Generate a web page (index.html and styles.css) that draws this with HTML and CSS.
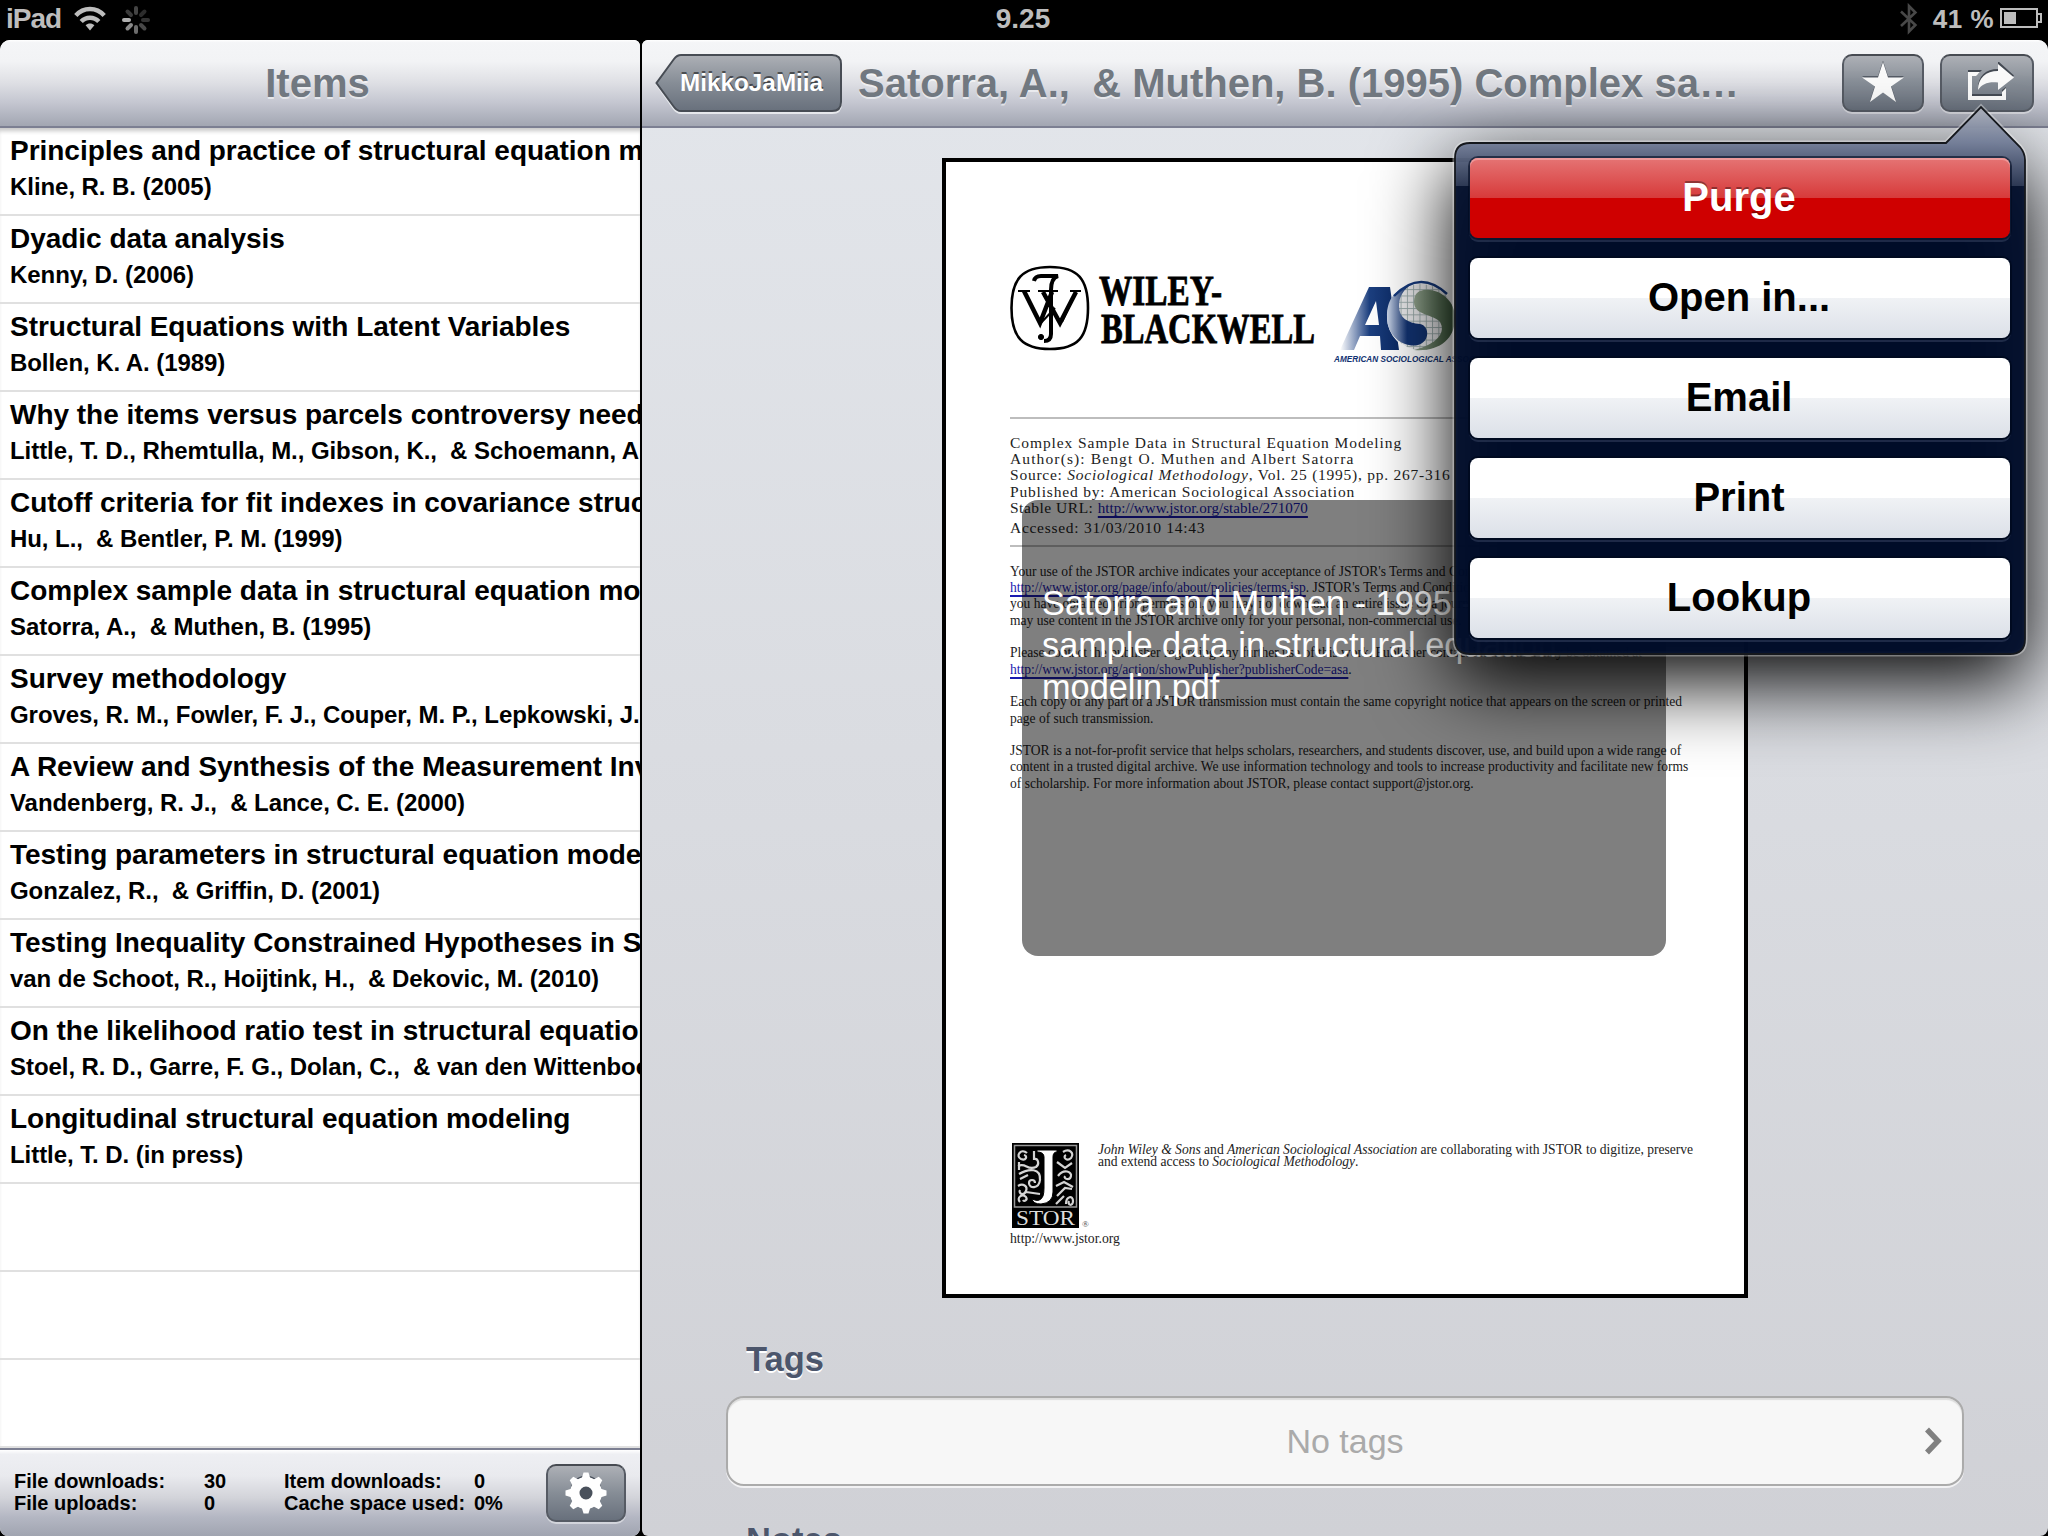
FILE: index.html
```html
<!DOCTYPE html>
<html lang="en">
<head>
<meta charset="utf-8">
<title>Items</title>
<link rel="stylesheet" href="styles.css">
</head>
<body>
<header class="status">
  <div class="status-side">
    <span class="device">iPad</span>
    <svg class="wifi" width="32" height="26" viewBox="0 0 32 26" fill="none" stroke="#bdbdbd" stroke-width="4.4">
      <path d="M1.8 9.5C9.5 .8 22.5 .8 30.2 9.5"/><path d="M7.2 15.6C12 10.4 20 10.4 24.8 15.6"/><path d="M16 24.6l-4.4-5.4c2.6-2.2 6.2-2.2 8.800 0z" fill="#bdbdbd" stroke="none"/>
    </svg>
    <svg class="spinner" width="30" height="30" viewBox="-15 -15 30 30" stroke-width="4" stroke-linecap="round">
      <path d="M0-7v-5" stroke="#444"/><path d="M5-5l3.500-3.500" stroke="#2c2c2c"/><path d="M7 0h5" stroke="#333"/><path d="M5 5l3.500 3.500" stroke="#484848"/><path d="M0 7v5" stroke="#6c6c6c"/><path d="M-5 5l-3.500 3.500" stroke="#8a8a8a"/><path d="M-7 0h-5" stroke="#b0b0b0"/><path d="M-5-5l-3.500-3.500" stroke="#3a3a3a"/>
    </svg>
  </div>
  <div class="clock">9.25</div>
  <div class="status-side status-right">
    <svg class="bluetooth" width="18" height="32" viewBox="0 0 18 32" fill="none" stroke="#484848" stroke-width="2.600"><path d="M1 8.500L15.400 22 9 28.500V3L15.400 9.500 1 23"/></svg>
    <span class="percent">41 %</span>
    <svg width="42" height="22" viewBox="0 0 42 22"><path d="M1 1h36v18H1z" fill="none" stroke="#bdbdbd" stroke-width="2"/><path d="M4 4h12v12H4z" fill="#bdbdbd"/><path d="M38 6h3v8h-3" fill="none" stroke="#bdbdbd" stroke-width="2"/></svg>
  </div>
</header>

<main class="split">
  <section class="pane master">
    <div class="navbar"><h1 class="nav-title items-title">Items</h1></div>
    <ul class="items">
      <li class="item"><b>Principles and practice of structural equation modeling</b><span>Kline, R. B. (2005)</span></li>
      <li class="item"><b>Dyadic data analysis</b><span>Kenny, D. (2006)</span></li>
      <li class="item"><b>Structural Equations with Latent Variables</b><span>Bollen, K. A. (1989)</span></li>
      <li class="item"><b>Why the items versus parcels controversy needn't be one</b><span>Little, T. D., Rhemtulla, M., Gibson, K.,  &amp; Schoemann, A. M.</span></li>
      <li class="item"><b>Cutoff criteria for fit indexes in covariance structure analysis</b><span>Hu, L.,  &amp; Bentler, P. M. (1999)</span></li>
      <li class="item"><b>Complex sample data in structural equation modeling</b><span>Satorra, A.,  &amp; Muthen, B. (1995)</span></li>
      <li class="item"><b>Survey methodology</b><span>Groves, R. M., Fowler, F. J., Couper, M. P., Lepkowski, J. M.</span></li>
      <li class="item"><b>A Review and Synthesis of the Measurement Invariance</b><span>Vandenberg, R. J.,  &amp; Lance, C. E. (2000)</span></li>
      <li class="item"><b>Testing parameters in structural equation modeling</b><span>Gonzalez, R.,  &amp; Griffin, D. (2001)</span></li>
      <li class="item"><b>Testing Inequality Constrained Hypotheses in SEM</b><span>van de Schoot, R., Hoijtink, H.,  &amp; Dekovic, M. (2010)</span></li>
      <li class="item"><b>On the likelihood ratio test in structural equation modeling</b><span>Stoel, R. D., Garre, F. G., Dolan, C.,  &amp; van den Wittenboer, G.</span></li>
      <li class="item"><b>Longitudinal structural equation modeling</b><span>Little, T. D. (in press)</span></li>
      <li class="item"></li><li class="item"></li><li class="item"></li>
    </ul>
    <footer class="toolbar">
      <dl class="stats">
        <dt>File downloads:</dt><dd>30</dd><dt>Item downloads:</dt><dd>0</dd>
        <dt>File uploads:</dt><dd>0</dd><dt>Cache space used:</dt><dd>0%</dd>
      </dl>
      <button class="btn btn-gear" aria-label="Settings">
        <svg width="44" height="46" viewBox="-22 -23 44 46">
          <circle r="15.500" cy="-2" fill="#4a515c"/>
          <g fill="#fff"><path fill-rule="evenodd" d="M0-16A16 16 0 1 1 0 16 16 16 0 0 1 0-16zM0-6.500A6.500 6.500 0 1 0 0 6.500 6.500 6.500 0 0 0 0-6.500z"/>
          <path id="tooth" d="M-4.500-14L-2.500-20.500h5L4.500-14z"/><use href="#tooth" transform="rotate(45)"/><use href="#tooth" transform="rotate(90)"/><use href="#tooth" transform="rotate(135)"/><use href="#tooth" transform="rotate(180)"/><use href="#tooth" transform="rotate(225)"/><use href="#tooth" transform="rotate(270)"/><use href="#tooth" transform="rotate(315)"/></g>
        </svg>
      </button>
    </footer>
  </section>

  <section class="pane detail">
    <div class="navbar detail-bar">
      <button class="back">
        <svg class="back-shape" width="188" height="62" viewBox="0 0 188 62">
          <defs><linearGradient id="steel" x1="0" y1="0" x2="0" y2="1"><stop offset="0" stop-color="#adb0b6"/><stop offset=".5" stop-color="#868d96"/><stop offset="1" stop-color="#68707c"/></linearGradient></defs>
          <path d="M26 4H177Q186 4 186 13V51Q186 60 177 60H26Q22 60 19 56L2 32 19 9Q22 4 26 4Z" fill="none" stroke="#e6e8ec" stroke-width="2"/>
          <path d="M26 2H177Q186 2 186 11V49Q186 58 177 58H26Q22 58 19 54L1.500 30 19 6Q22 2 26 2Z" fill="url(#steel)" stroke="#474c54" stroke-width="2"/>
        </svg>
        <span class="back-label">MikkoJaMiia</span>
      </button>
      <h2 class="nav-title detail-title">Satorra, A.,  &amp; Muthen, B. (1995) Complex sa…</h2>
      <button class="btn btn-star" aria-label="Favourite">
        <svg width="44" height="44" viewBox="0 0 44 44"><path d="M22 1l5 15.500h16L30 25.500 35 41 22 31.500 9 41l5-15.500L1 16.500h16z" fill="#555b65" transform="translate(0 -1.500)"/><path d="M22 1l5 15.500h16L30 25.500 35 41 22 31.500 9 41l5-15.500L1 16.500h16z" fill="#fafafa"/></svg>
      </button>
      <button class="btn btn-share" aria-label="Share">
        <svg width="50" height="40" viewBox="0 0 50 40">
          <g fill="#444a53" transform="translate(0 -2)"><path d="M2 10H16L12 14H6V34H36V30L40 27V38H2Z"/><path d="M32 1L48 15.500 32 29V21C22 20 16 22 12 28 12 16 20 9 32 9Z"/></g>
          <g fill="#fafafa"><path d="M2 10H14L10 14H6V34H36V30L40 26V38H2Z"/><path d="M32 2L48 15.500 32 28V20.500C22 19.500 16 22 12 28 12 16 20 9 32 9Z"/></g>
        </svg>
      </button>
    </div>

    <div class="content">
      <article class="page">
        <svg class="logos" width="690" height="112" viewBox="0 0 690 112">
          <g fill="none" stroke="#000" transform="translate(0 -2)">
            <path d="M40 3C68 3 78 15 78 44S68 85 40 85 1.500 73 1.500 44 12 3 40 3Z" stroke-width="2.600"/>
            <path d="M24 17q1-5 7-5H48Q41 14 41 26V70Q41 77 34 77" stroke-width="4"/>
            <path d="M14 27L30 59 42 28M33 28L50 59 66 28" stroke-width="4.500"/>
            <path d="M8 27H20M28 27H48M60 27H71M45 44L30 60M66 28L52 58" stroke-width="2"/>
            <circle cx="31" cy="73" r="2.600" fill="#000"/>
          </g>
          <g class="wiley"><text x="89" y="38.500" textLength="123" lengthAdjust="spacingAndGlyphs">WILEY-</text><text x="91" y="76.500" textLength="214" lengthAdjust="spacingAndGlyphs">BLACKWELL</text></g>
          <defs>
            <linearGradient id="aFill"><stop offset="0" stop-color="#fff"/><stop offset=".5" stop-color="#1c3f80"/><stop offset="1" stop-color="#0b2b66"/></linearGradient>
            <linearGradient id="sFill"><stop offset="0" stop-color="#cfd9ea"/><stop offset=".5" stop-color="#123372"/><stop offset="1" stop-color="#123372"/></linearGradient>
            <linearGradient id="gFill"><stop offset="0" stop-color="#93a48f"/><stop offset="1" stop-color="#3c5a3b"/></linearGradient>
            <pattern id="grid" width="6.300" height="6.300" patternUnits="userSpaceOnUse"><path d="M0 .5H6.300M.5 0V6.300" stroke="#9aa" stroke-width=".9"/></pattern>
          </defs>
          <g transform="translate(0 -2)">
          <path fill="url(#aFill)" fill-rule="evenodd" d="M330 86L359 23H380L389 86H371L370 72H350L344 86ZM355 61H369L366 37Z"/>
          <circle cx="411" cy="53" r="34" fill="#fff"/><circle cx="411" cy="53" r="33" fill="#ececee"/><circle cx="411" cy="53" r="33" fill="url(#grid)"/>
          <path d="M402 20C383 27 377 36 377 53 377 74 396 84 408 81 420 78 420 62 410 60 398 59 389 54 389 42 389 32 394 25 402 20Z" fill="url(#sFill)"/>
          <path d="M410 27C425 22 445 34 445 54 445 76 428 88 404 86 428 80 436 68 430 58 424 50 404 52 404 38 404 32 406 29 410 27Z" fill="url(#gFill)"/>
          <path d="M384 32Q410 5 437 30" fill="none" stroke="#163a7d" stroke-width="2.500"/>
          <text class="asa" x="324" y="98" textLength="168" lengthAdjust="spacingAndGlyphs">AMERICAN SOCIOLOGICAL ASSOCIATION</text>
          </g>
        </svg>
        <hr>
        <div class="meta">
          <p class="m1">Complex Sample Data in Structural Equation Modeling</p>
          <p class="m2">Author(s): Bengt O. Muthen and Albert Satorra</p>
          <p class="m3">Source: <i>Sociological Methodology</i>, Vol. 25 (1995), pp. 267-316</p>
          <p class="m4">Published by: American Sociological Association</p>
          <p class="m5">Stable URL: <a>http://www.jstor.org/stable/271070</a></p>
          <p class="m6">Accessed: 31/03/2010 14:43</p>
        </div>
        <hr>
        <div class="terms">
          <p>Your use of the JSTOR archive indicates your acceptance of JSTOR's Terms and Conditions of Use, available at<br><a>http://www.jstor.org/page/info/about/policies/terms.jsp</a>. JSTOR's Terms and Conditions of Use provides, in part, that unless<br>you have obtained prior permission, you may not download an entire issue of a journal or multiple copies of articles, and you<br>may use content in the JSTOR archive only for your personal, non-commercial use.</p>
          <p>Please contact the publisher regarding any further use of this work. Publisher contact information may be obtained at<br><a>http://www.jstor.org/action/showPublisher?publisherCode=asa</a>.</p>
          <p>Each copy of any part of a JSTOR transmission must contain the same copyright notice that appears on the screen or printed<br>page of such transmission.</p>
          <p>JSTOR is a not-for-profit service that helps scholars, researchers, and students discover, use, and build upon a wide range of<br>content in a trusted digital archive. We use information technology and tools to increase productivity and facilitate new forms<br>of scholarship. For more information about JSTOR, please contact support@jstor.org.</p>
        </div>
        <div class="imprint">
          <svg width="80" height="88" viewBox="0 0 80 88">
            <path d="M2 1H69V86H2Z" fill="#000"/><path d="M4.500 3.500H66.500V65H4.500Z" fill="none" stroke="#999" stroke-width="1.500"/>
            <g fill="none" stroke="#d4d4d4" stroke-width="2.200"><path d="M17 11c-6-5-12 3-6 6 5 2 7-3 3-4M8 24c8-4 9 5 18 1 4-3 2-9-2-8M9 32c10-6 22-6 21 6-1 9-11 9-11 3 0-4 6-4 6 0M8 44c5-3 10 0 8 5s-8 3-6-1M10 60c-4-4 2-9 6-5 2 3-2 5-3 3M16 50l14 2M53 10c6-4 12 1 8 6-4 4-9-1-5-3M47 20l8 6 7-5M48 34c6-8 14-4 13 0-1 5-8 3-6 0M46 44l8-4 9 5M47 54l8-8 7 1M46 62l8-8M56 62c0-8 7-9 7-3s-6 4-4 0M10 37l8-4M24 9v9M9 28v-8"/></g>
            <path d="M27 8H47V10Q43 10 43 15V50Q43 61 31 62 23 62 22 57 30 61 33 54 34 51 34 46V15Q34 10 27 10Z" fill="#fff" stroke="#000"/>
            <text class="stor" x="6" y="83" textLength="59" lengthAdjust="spacingAndGlyphs">STOR</text><text class="reg" x="72" y="85">®</text>
          </svg>
          <p class="collab"><i>John Wiley &amp; Sons</i> and <i>American Sociological Association</i> are collaborating with JSTOR to digitize, preserve<br>and extend access to <i>Sociological Methodology</i>.</p>
        </div>
        <p class="site">http://www.jstor.org</p>
        <div class="file-overlay">Satorra and Muthen - 1995 - Complex<br>sample data in structural equation<br>modelin.pdf</div>
      </article>

      <h3 class="group-title">Tags</h3>
      <div class="tag-row"><span>No tags</span><svg width="20" height="28" viewBox="0 0 20 28" fill="none" stroke="#808080" stroke-width="5.500"><path d="M3 2.500L14 14 3 25.500"/></svg></div>
      <h3 class="group-title notes">Notes</h3>
    </div>
  </section>
</main>

<div class="popover-shadow"></div>
<div class="popover">
  <svg class="popover-shape" width="580" height="560" viewBox="0 0 580 560">
    <defs>
      <clipPath id="shape"><path id="outline" d="M20 43H496L531 7 570 47Q575 53 575 60V539Q575 554 560 554H20Q5 554 5 539V58Q5 43 20 43Z"/></clipPath>
      <linearGradient id="gloss" gradientUnits="userSpaceOnUse" x1="0" y1="7" x2="0" y2="86"><stop offset="0" stop-color="#fff" stop-opacity=".66"/><stop offset=".45" stop-color="#dfe8ff" stop-opacity=".5"/><stop offset="1" stop-color="#dfe8ff" stop-opacity=".17"/></linearGradient>
    </defs>
    <use href="#outline" fill="none" stroke="#fff" stroke-opacity=".35" stroke-width="5"/>
    <use href="#outline" fill="#000d2b" fill-opacity=".94"/>
    <path d="M0 0H580V86H0Z" fill="url(#gloss)" clip-path="url(#shape)"/>
    <use href="#outline" fill="none" stroke="#15181d" stroke-width="1.800"/>
  </svg>
  <button class="action danger">Purge</button>
  <button class="action">Open in...</button>
  <button class="action">Email</button>
  <button class="action">Print</button>
  <button class="action">Lookup</button>
</div>
</body>
</html>
```
FILE: styles.css
```css
* { box-sizing: border-box; margin: 0; padding: 0; }
body { width: 2048px; height: 1536px; overflow: hidden; position: relative; background: #000; color: #000; font-family: "Liberation Sans", Arial, sans-serif; display: flex; flex-direction: column; }
button { font: inherit; border: 0; background: none; }
svg { display: block; flex: none; }

.status { height: 40px; flex: none; display: grid; grid-template-columns: 1fr auto 1fr; align-items: center; color: #bdbdbd; font-weight: bold; font-size: 28px; line-height: 38px; padding: 0 6px 2px; }
.status-side { display: flex; align-items: center; }
.status-right { justify-content: flex-end; }
.device { letter-spacing: -1px; width: 68px; }
.clock { padding-right: 2px; }
.spinner { margin-left: 15px; margin-top: 2px; }
.bluetooth { margin-right: 15px; }
.percent { font-size: 26px; margin-right: 6px; letter-spacing: .5px; }

.split { flex: 1; display: flex; gap: 2px; min-height: 0; }
.pane { display: flex; flex-direction: column; overflow: hidden; min-height: 0; }
.master { width: 640px; background: #fff; border-radius: 10px 6px 8px 8px; }
.detail { width: 1406px; background: linear-gradient(#e3e6eb, #d0d1d6); border-radius: 6px 10px 8px 6px; }
.navbar { height: 88px; flex: none; display: flex; align-items: center; justify-content: center; border-bottom: 2px solid #7c7f92; background: linear-gradient(#fff 0, #f4f5f7 3%, #f2f3f5 25%, #dedfe4 50%, #c5c7d1 72%, #a2a6b2 100%); }
.nav-title { font-size: 40px; line-height: 48px; font-weight: bold; color: #717880; text-shadow: 0 2px 0 rgba(255,255,255,.55); white-space: pre; }
.items-title { padding-right: 5px; }
.detail-bar { justify-content: flex-start; padding: 0 14px; }
.detail-title { margin-left: 16px; flex: 1; }

.back { position: relative; width: 186px; height: 60px; text-align: left; color: #fff; }
.back-shape { position: absolute; left: -1px; top: 0; }
.back-label { position: relative; display: block; padding-left: 24px; font-size: 24.300px; line-height: 60px; font-weight: bold; text-shadow: 0 -2px 0 rgba(0,0,0,.5); }
.btn { height: 58px; flex: none; display: flex; align-items: center; justify-content: center; border-radius: 10px; border: 2px solid #565b64; border-top-color: #474b52; background: linear-gradient(#adb0b6, #868d96 50%, #68707c); box-shadow: 0 2px 0 rgba(255,255,255,.45); }
.btn-star { width: 82px; margin-right: 16px; }
.btn-share { width: 94px; padding-left: 8px; padding-bottom: 3px; }
.btn-gear { width: 80px; }

.items { list-style: none; flex: 1; min-height: 0; overflow: hidden; box-shadow: inset 0 5px 4px -2px rgba(0,0,0,.22); }
.item { height: 88px; padding: 5px 0 0 10px; border-bottom: 2px solid #e0e0e0; white-space: pre; overflow: hidden; font-weight: bold; }
.item b { display: block; font-size: 28px; line-height: 36px; letter-spacing: -.03px; }
.item span { display: block; margin-top: 2px; font-size: 24px; line-height: 32px; letter-spacing: -.06px; }

.toolbar { height: 88px; flex: none; border-top: 2px solid #7c7f92; display: flex; justify-content: space-between; align-items: center; padding: 0 14px; background: linear-gradient(#fff 0, #eeeff3 5%, #e9eaee 30%, #d3d4da 55%, #b4b7c3 78%, #a0a4b0 100%); }
.stats { display: grid; grid-template-columns: 190px 80px 190px auto; font-size: 20px; line-height: 22px; font-weight: bold; margin-top: -2px; }

.content { flex: 1; min-height: 0; overflow: hidden; padding: 30px 84px 0; }
.page { position: relative; width: 806px; height: 1140px; margin-left: 216px; padding: 104px 50px 0 64px; border: 4px solid #000; background: #fff; font-family: "Liberation Serif", "Times New Roman", serif; color: #222; display: flex; flex-direction: column; }
.page hr { border: 0; height: 2px; background: #bdbdbd; flex: none; }
.logos { margin-bottom: 39px; overflow: visible; }
.wiley text { font: bold 43px "Liberation Serif", serif; fill: #000; stroke: #000; stroke-width: .8px; }
.asa { font: italic bold 9px "Liberation Sans", sans-serif; fill: #123372; }
.meta { padding: 15.600px 0 8px; font-size: 15.500px; line-height: 16.400px; letter-spacing: .92px; white-space: nowrap; color: #222; }
.m2 { letter-spacing: 1.120px; }
.m3 { letter-spacing: .760px; }
.m4 { letter-spacing: .820px; }
.m5 { letter-spacing: .500px; }
.m5 a { letter-spacing: 0; font-size: 15.100px; }
.m6 { margin-top: 3.500px; letter-spacing: .720px; }
.page a { color: #1a1ab0; text-decoration: underline; text-decoration-thickness: 1.500px; text-underline-offset: 3px; }
.terms { padding-top: 17.300px; font-size: 13.520px; line-height: 16.300px; white-space: nowrap; }
.terms p + p { margin-top: 16.300px; }
.imprint { margin-top: auto; display: flex; gap: 8px; }
.collab { font-size: 13.550px; line-height: 12px; white-space: nowrap; padding-top: 2px; }
.stor { font: 20px "Liberation Serif", serif; fill: #ddd; }
.reg { font: 9px "Liberation Serif", serif; fill: #444; }
.site { font-size: 13.700px; line-height: 18px; margin: 0 0 46px; }
.file-overlay { position: absolute; left: 76px; top: 338px; width: 644px; height: 456px; padding: 82px 20px; border-radius: 16px; background: rgba(0,0,0,.5); color: #fff; font: 34.300px/42px "Liberation Sans", Arial, sans-serif; white-space: nowrap; }

.group-title { margin: 41px 0 17px 20px; font-size: 34.500px; line-height: 40px; color: #4c566c; text-shadow: 0 2px 0 #fff; }
.group-title.notes { margin-top: 34px; }
.tag-row { height: 90px; display: flex; align-items: center; justify-content: flex-end; padding: 0 18px 0 20px; border: 2px solid #ababab; border-radius: 18px; background: #f7f7f7; box-shadow: 0 2px 0 #f2f2f4, inset 0 2px 1px #dcdcdc; color: #aaa; font-size: 34px; }
.tag-row span { flex: 1; text-align: center; padding-left: 18px; }

.popover-shadow { position: absolute; left: 1452px; top: 166px; width: 576px; height: 516px; border-radius: 20px; background: #000; filter: blur(40px); }
.popover { position: absolute; left: 1450px; top: 100px; width: 580px; height: 560px; padding: 58px 20px 0; display: flex; flex-direction: column; gap: 20px; }
.popover-shape { position: absolute; left: 0; top: 0; }
.action { position: relative; height: 80px; flex: none; padding: 0 2px 1px 0; border-radius: 8px; font-size: 40px; font-weight: bold; background: linear-gradient(#fff 50%, #f0f2f5 50%, #dce0e8); box-shadow: 0 0 0 2px #000a20, 0 3px 0 1px rgba(50,62,92,.6); }
.danger { color: #fff; text-shadow: 0 -2px 0 rgba(0,0,0,.35); background: linear-gradient(#e57474, #d73a3a 50%, #cf0000 50%); box-shadow: inset 0 2px 0 #ee9a9a, 0 0 0 2px rgba(0,10,32,.6), 0 3px 0 1px rgba(50,62,92,.6); }
```
